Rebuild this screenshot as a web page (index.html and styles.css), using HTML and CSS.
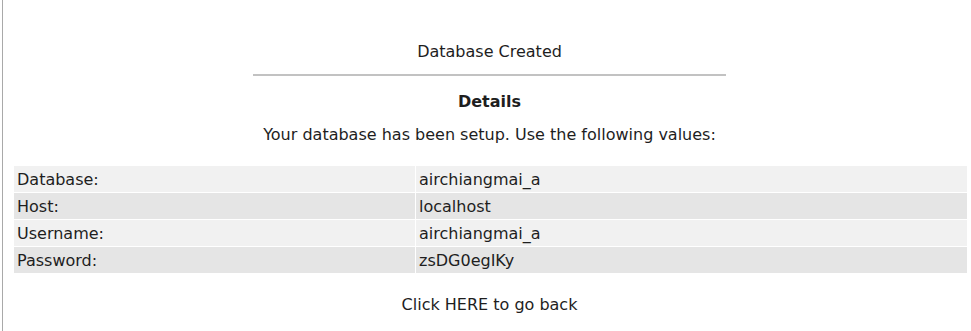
FILE: index.html
```html
<!DOCTYPE html>
<html>
	<head>
		<title>Database Created</title>
		<meta charset="utf-8">
		<link rel="stylesheet" href="styles.css">
	</head>
	<body>
		<div id="frame">
			<p id="title">Database Created</p>
			<hr class="rule">
			<p id="details">Details</p>
			<p class="note">Your database has been setup. Use the following values:</p>

			<table class="values">
				<tr class="odd">
					<td class="key">Database:</td>
					<td>airchiangmai_a</td>
				</tr>
				<tr class="even">
					<td class="key">Host:</td>
					<td>localhost</td>
				</tr>
				<tr class="odd">
					<td class="key">Username:</td>
					<td>airchiangmai_a</td>
				</tr>
				<tr class="even">
					<td class="key">Password:</td>
					<td>zsDG0egIKy</td>
				</tr>
			</table>

			<p class="back"><a href="#">Click HERE to go back</a></p>
		</div>
	</body>
</html>
```

FILE: styles.css
```css
html, body, p, table, td {
	margin: 0;
	padding: 0;
}

body {
	background: #fff;
	font: 16px/19px "DejaVu Sans", Verdana, sans-serif;
	color: #1e1e1e;
	height: 331px;
	overflow: hidden;
}

#frame {
	margin-left: 2px;
	border-left: 1px solid #a9a9a9;
	height: 331px;
	padding: 42px 3px 0 8px;
	box-sizing: border-box;
	text-align: center;
}

#title {
	margin: 0;
}

.rule {
	width: 473px;
	height: 2px;
	margin: 13px auto 0;
	border: none;
	background-color: #c2c2c2;
}

#details {
	margin-top: 16px;
	font-weight: bold;
}

.note {
	margin-top: 14px;
}

.values {
	width: 955px;
	margin: 21px 0 0 2px;
	border-collapse: separate;
	border-spacing: 1px;
	text-align: left;
}
.values td {
	padding: 4px 3px 3px;
	height: 19px;
}
.values .key {
	width: 395px;
}
.values .odd td {
	background-color: #f1f1f1;
}
.values .even td {
	background-color: #e5e5e5;
}

.back {
	margin-top: 21px;
}
.back a {
	color: #1e1e1e;
	text-decoration: none;
}
```
